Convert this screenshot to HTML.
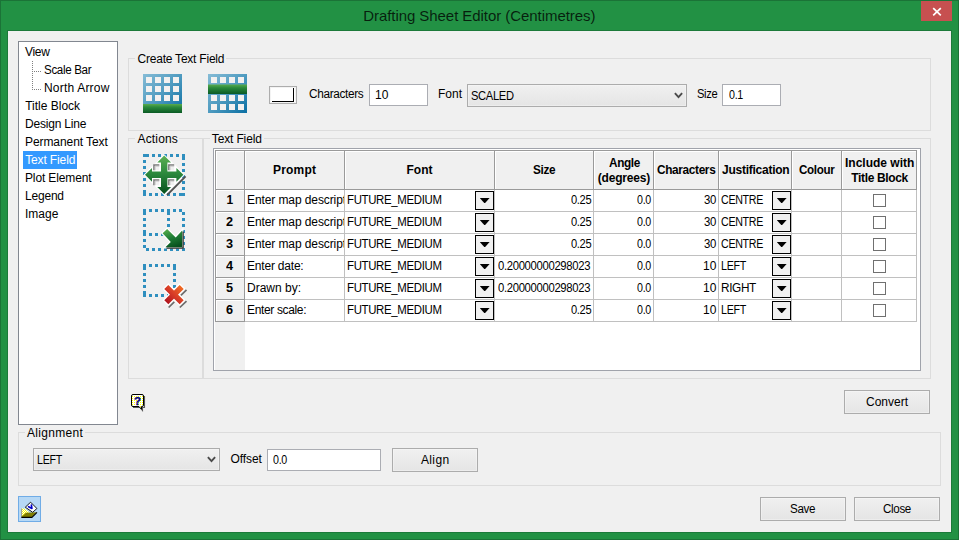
<!DOCTYPE html>
<html lang="en"><head><meta charset="utf-8"><title>Drafting Sheet Editor (Centimetres)</title>
<style>
html,body{margin:0;padding:0}
body{width:959px;height:540px;position:relative;overflow:hidden;background:#229144;font-family:"Liberation Sans",sans-serif;font-size:12px}
.a{position:absolute;box-sizing:border-box}
.t{position:absolute;white-space:nowrap;transform-origin:0 0}
.gb{position:absolute;box-sizing:border-box;border:1px solid #dcdcdc}
.gap{position:absolute;background:#f0f0f0;height:1px}
.inp{position:absolute;box-sizing:border-box;border:1px solid #abadb3;background:#fff}
.btn{position:absolute;box-sizing:border-box;border:1px solid #acacac;background:linear-gradient(#f0f0f0,#e5e5e5);box-shadow:inset 0 0 0 1px rgba(255,255,255,.3)}
.hc{position:absolute;box-sizing:border-box;top:150px;height:39px;background:#f0f0f0;border-left:1px solid #9a9a9a;border-top:1px solid #9a9a9a;box-shadow:inset 1px 1px 0 #fff}
.rh{position:absolute;box-sizing:border-box;left:215px;width:29px;height:22px;background:#f0f0f0;border-left:1px solid #9a9a9a;border-top:1px solid #9a9a9a;box-shadow:inset 1px 1px 0 #fff}
.gl{position:absolute;background:#9a9a9a}
.vl{position:absolute;width:1px;top:190px;height:132px;background:#c0c0c0}
.hl{position:absolute;height:1px;left:245px;width:672px;background:#c0c0c0}
.dd{position:absolute;box-sizing:border-box;width:19px;height:19px;border:1px solid #000;background:#f0f0f0}
.dd:after{content:"";position:absolute;left:3.8px;top:5.9px;width:9.8px;height:5.6px;background:#000;clip-path:polygon(0 0,100% 0,50% 100%)}
.cb{position:absolute;box-sizing:border-box;left:873px;width:13px;height:13px;border:1px solid #707070;background:#fff}
</style></head><body>
<!-- window frame -->
<div class="a" style="left:0;top:0;width:959px;height:540px;border:1px solid #1b7337"></div>
<div class="a" style="left:7px;top:30px;width:945px;height:503px;background:#1c7a3a"></div>
<div class="a" style="left:8px;top:31px;width:943px;height:501px;background:#f0f0f0"></div>
<!-- close button -->
<div class="a" style="left:921px;top:1px;width:31px;height:20px;background:#c75050"></div>
<svg class="a" style="left:921px;top:1px" width="31" height="20"><path d="M12.2 7.2 L19.8 14.4 M19.8 7.2 L12.2 14.4" stroke="#fff" stroke-width="1.7" fill="none"/></svg>

<!-- tree -->
<div class="a" style="left:18px;top:41px;width:100px;height:384px;border:1px solid #828790;background:#fff"></div>
<div class="a" style="left:23px;top:151px;width:54px;height:18px;background:#3399ff"></div>
<svg class="a" style="left:30px;top:58px" width="14" height="34"><path d="M2.5 3 V32 M2 13.5 H11 M2 31.5 H11" stroke="#808080" stroke-width="1" stroke-dasharray="1 1" fill="none"/></svg>

<!-- group boxes -->
<div class="gb" style="left:128px;top:58px;width:803px;height:73px"></div>
<div class="gap" style="left:135px;top:58px;width:91px"></div>
<div class="gb" style="left:128px;top:138px;width:75px;height:241px"></div>
<div class="gap" style="left:135px;top:138px;width:44px"></div>
<div class="gb" style="left:203px;top:138px;width:728px;height:241px"></div>
<div class="gap" style="left:210px;top:138px;width:54px"></div>
<div class="gb" style="left:18px;top:432px;width:923px;height:54px"></div>
<div class="gap" style="left:25px;top:432px;width:60px"></div>

<!-- create text field icons -->
<svg class="a" style="left:143px;top:74px" width="39" height="39">
<defs>
<linearGradient id="bl" x1="0" y1="0" x2="1" y2="1"><stop offset="0" stop-color="#86bcd6"/><stop offset="0.5" stop-color="#4f9bc0"/><stop offset="1" stop-color="#0a6fa3"/></linearGradient>
<linearGradient id="gr" x1="0" y1="0" x2="0" y2="1"><stop offset="0" stop-color="#5aab4c"/><stop offset="0.35" stop-color="#2b8a3c"/><stop offset="1" stop-color="#0a5a25"/></linearGradient>
<g id="cells4"><rect x="3" width="6" height="6"/><rect x="12" width="6" height="6"/><rect x="21" width="6" height="6"/><rect x="30" width="6" height="6"/></g>
</defs>
<rect width="39" height="39" fill="url(#bl)"/>
<g fill="#f3f1f0"><use href="#cells4" y="3"/><use href="#cells4" y="12"/><use href="#cells4" y="21"/></g>
<rect y="30" width="39" height="9" fill="url(#gr)"/>
</svg>
<svg class="a" style="left:208px;top:74px" width="39" height="39">
<rect width="39" height="39" fill="url(#bl)"/>
<g fill="#f3f1f0"><use href="#cells4" y="3"/><use href="#cells4" y="21"/><use href="#cells4" y="30"/></g>
<rect y="10.5" width="39" height="9.5" fill="url(#gr)"/>
</svg>
<!-- colour swatch -->
<div class="a" style="left:269px;top:86px;width:28px;height:18px;border:1px solid #adadad;background:#fff;box-shadow:inset 0 0 0 1px #f3f3f3"></div>
<div class="a" style="left:272px;top:88px;width:22px;height:14px;border-right:1px solid #000;border-bottom:1px solid #000"></div>

<!-- top row inputs -->
<div class="inp" style="left:369px;top:84px;width:59px;height:22px"></div>
<div class="btn" style="left:467px;top:84px;width:220px;height:23px"></div>
<svg class="a" style="left:674px;top:92px" width="10" height="8"><path d="M0.9 1.2 L4.5 5.1 L8.1 1.2" stroke="#4a4a4a" stroke-width="1.9" fill="none"/></svg>
<div class="inp" style="left:722px;top:84px;width:59px;height:22px"></div>

<!-- action icons -->
<svg class="a" style="left:140px;top:150px" width="50" height="50"><defs><linearGradient id="g2" x1="0" y1="0" x2="0" y2="1"><stop offset="0" stop-color="#5db052"/><stop offset="0.45" stop-color="#2d8a3e"/><stop offset="1" stop-color="#06501e"/></linearGradient></defs><g fill="#2f8fbf"><rect x="3" y="4" width="6" height="3"/><rect x="12" y="4" width="3" height="3"/><rect x="18" y="4" width="3" height="3"/><rect x="24" y="4" width="3" height="3"/><rect x="30" y="4" width="3" height="3"/><rect x="36" y="4" width="3" height="3"/><rect x="42" y="4" width="3" height="6"/><rect x="42" y="13" width="3" height="3"/><rect x="42" y="19" width="3" height="3"/><rect x="42" y="25" width="3" height="3"/><rect x="42" y="31" width="3" height="3"/><rect x="42" y="37" width="3" height="3"/><rect x="39" y="43" width="6" height="3"/><rect x="33" y="43" width="3" height="3"/><rect x="27" y="43" width="3" height="3"/><rect x="21" y="43" width="3" height="3"/><rect x="15" y="43" width="3" height="3"/><rect x="9" y="43" width="3" height="3"/><rect x="3" y="40" width="3" height="6"/><rect x="3" y="34" width="3" height="3"/><rect x="3" y="28" width="3" height="3"/><rect x="3" y="22" width="3" height="3"/><rect x="3" y="16" width="3" height="3"/><rect x="3" y="10" width="3" height="3"/></g><path d="M27 45.2 L45.6 26.4" stroke="#505050" stroke-width="1.9"/><path d="M24.2 4.2 L44.8 24.8 L24.2 45.4 L3.6 24.8 Z" fill="#fff"/><polygon points="24.2,5.6 31.1,12.6 27.4,12.6 27.4,21.6 36.4,21.6 36.4,17.9 43.4,24.8 36.4,31.7 36.4,28 27.4,28 27.4,37 31.1,37 24.2,44 17.3,37 21,37 21,28 12,28 12,31.7 5,24.8 12,17.9 12,21.6 21,21.6 21,12.6 17.3,12.6" fill="url(#g2)"/><rect x="13.2" y="14.3" width="6.1" height="6" fill="#f1f1f1"/><path d="M13.95 20.3 V15.05 H19.3" stroke="#7c7c7c" stroke-width="1.5" fill="none"/><path d="M15.1 20.3 V16.2 H19.3" stroke="#c4c4c4" stroke-width="0.9" fill="none"/><rect x="13.2" y="29.2" width="6.1" height="6" fill="#f1f1f1"/><path d="M13.95 35.2 V29.95 H19.3" stroke="#7c7c7c" stroke-width="1.5" fill="none"/><path d="M15.1 35.2 V31.1 H19.3" stroke="#c4c4c4" stroke-width="0.9" fill="none"/><rect x="28.1" y="14.3" width="6.1" height="6" fill="#f1f1f1"/><path d="M28.85 20.3 V15.05 H34.2" stroke="#7c7c7c" stroke-width="1.5" fill="none"/><path d="M30 20.3 V16.2 H34.2" stroke="#c4c4c4" stroke-width="0.9" fill="none"/><rect x="28.1" y="29.2" width="6.1" height="6" fill="#f1f1f1"/><path d="M28.85 35.2 V29.95 H34.2" stroke="#7c7c7c" stroke-width="1.5" fill="none"/><path d="M30 35.2 V31.1 H34.2" stroke="#c4c4c4" stroke-width="0.9" fill="none"/></svg>
<svg class="a" style="left:140px;top:205px" width="50" height="50"><defs><linearGradient id="g3" x1="0.2" y1="0" x2="0.6" y2="1"><stop offset="0" stop-color="#57ad4c"/><stop offset="0.5" stop-color="#1f7d36"/><stop offset="1" stop-color="#06501e"/></linearGradient></defs><g fill="#2f8fbf"><rect x="3" y="4" width="3" height="6"/><rect x="9" y="4" width="3" height="3"/><rect x="15" y="4" width="3" height="3"/><rect x="21" y="4" width="3" height="3"/><rect x="27" y="4" width="3" height="6"/><rect x="33" y="4" width="3" height="3"/><rect x="39" y="4" width="3" height="3"/><rect x="42" y="7" width="3" height="3"/><rect x="42" y="13" width="3" height="3"/><rect x="42" y="19" width="3" height="3"/><rect x="42" y="25" width="3" height="3"/><rect x="42" y="31" width="3" height="3"/><rect x="42" y="37" width="3" height="3"/><rect x="42" y="43" width="3" height="3"/><rect x="6" y="43" width="3" height="3"/><rect x="12" y="43" width="3" height="3"/><rect x="18" y="43" width="3" height="3"/><rect x="24" y="43" width="3" height="3"/><rect x="30" y="43" width="3" height="3"/><rect x="36" y="43" width="3" height="3"/><rect x="3" y="40" width="3" height="3"/><rect x="3" y="34" width="3" height="3"/><rect x="3" y="25" width="3" height="6"/><rect x="3" y="19" width="3" height="3"/><rect x="3" y="13" width="3" height="3"/><rect x="27" y="13" width="3" height="3"/><rect x="27" y="19" width="3" height="3"/><rect x="27" y="25" width="3" height="3"/><rect x="9" y="28" width="3" height="3"/><rect x="15" y="28" width="3" height="3"/><rect x="21" y="28" width="3" height="3"/></g><polygon points="27.1,24 35.7,32.4 42.2,25.6 42.2,42.2 25.4,42.2 30.8,36.9 22.6,28.3" fill="#fff" stroke="#fff" stroke-width="2.4" stroke-linejoin="miter"/><path d="M43.1 26.5 V43.1 H26.5" stroke="#2a2a2a" stroke-width="1.3" fill="none"/><polygon points="27.1,24 35.7,32.4 42.2,25.6 42.2,42.2 25.4,42.2 30.8,36.9 22.6,28.3" fill="url(#g3)"/></svg>
<svg class="a" style="left:140px;top:260px" width="50" height="50"><defs><linearGradient id="g4" x1="1" y1="0" x2="0" y2="1"><stop offset="0" stop-color="#f06c22"/><stop offset="0.5" stop-color="#d83c27"/><stop offset="1" stop-color="#b0141e"/></linearGradient></defs><g fill="#2f8fbf"><rect x="3" y="4" width="3" height="6"/><rect x="9" y="4" width="3" height="3"/><rect x="15" y="4" width="3" height="3"/><rect x="21" y="4" width="3" height="3"/><rect x="27" y="4" width="3" height="3"/><rect x="33" y="4" width="3" height="6"/><rect x="33" y="13" width="3" height="3"/><rect x="33" y="19" width="3" height="3"/><rect x="33" y="25" width="3" height="3"/><rect x="3" y="13" width="3" height="3"/><rect x="3" y="19" width="3" height="3"/><rect x="3" y="25" width="3" height="3"/><rect x="3" y="31" width="3" height="6"/><rect x="9" y="34" width="3" height="3"/><rect x="15" y="34" width="3" height="3"/><rect x="21" y="34" width="3" height="3"/><rect x="27" y="34" width="3" height="3"/></g><path d="M25.4 26 L42.6 43.2 M42.6 26 L25.4 43.2" stroke="#fff" stroke-width="8.2" fill="none"/><path d="M40.9 35.4 L46.5 29.8M28.6 47.5 L34.3 41.9M39.8 47.5 L46.5 41.2" stroke="#6c6c6c" stroke-width="1.7" fill="none"/><path d="M26.3 26.9 L41.7 42.3 M41.7 26.9 L26.3 42.3" stroke="url(#g4)" stroke-width="5.7" fill="none" /></svg>

<!-- table -->
<div class="a" style="left:213px;top:148px;width:708px;height:223px;border:1px solid #a0a3ab;background:#fff"></div>
<div class="a" style="left:215px;top:150px;width:30px;height:220px;background:#f0f0f0"></div>
<div class="hc" style="left:215px;width:29px"></div>
<div class="hc" style="left:244px;width:100px"></div>
<div class="hc" style="left:344px;width:150px"></div>
<div class="hc" style="left:494px;width:99px"></div>
<div class="hc" style="left:593px;width:60px"></div>
<div class="hc" style="left:653px;width:65px"></div>
<div class="hc" style="left:718px;width:73px"></div>
<div class="hc" style="left:791px;width:50px"></div>
<div class="hc" style="left:841px;width:75px"></div>
<div class="gl" style="left:916px;top:150px;width:1px;height:40px"></div>
<div class="rh" style="top:189px"></div><div class="rh" style="top:211px"></div><div class="rh" style="top:233px"></div>
<div class="rh" style="top:255px"></div><div class="rh" style="top:277px"></div><div class="rh" style="top:299px"></div>
<div class="gl" style="left:215px;top:189px;width:702px;height:1px"></div>
<div class="gl" style="left:244px;top:189px;width:1px;height:133px"></div>
<div class="gl" style="left:215px;top:321px;width:30px;height:1px"></div>
<div class="vl" style="left:344px"></div><div class="vl" style="left:494px"></div><div class="vl" style="left:593px"></div>
<div class="vl" style="left:653px"></div><div class="vl" style="left:718px"></div><div class="vl" style="left:791px"></div>
<div class="vl" style="left:841px"></div><div class="vl" style="left:916px"></div>
<div class="hl" style="top:211px"></div><div class="hl" style="top:233px"></div><div class="hl" style="top:255px"></div>
<div class="hl" style="top:277px"></div><div class="hl" style="top:299px"></div><div class="hl" style="top:321px"></div>
<div class="dd" style="left:475px;top:191px"></div><div class="dd" style="left:475px;top:213px"></div><div class="dd" style="left:475px;top:235px"></div>
<div class="dd" style="left:475px;top:257px"></div><div class="dd" style="left:475px;top:279px"></div><div class="dd" style="left:475px;top:301px"></div>
<div class="dd" style="left:772px;top:191px"></div><div class="dd" style="left:772px;top:213px"></div><div class="dd" style="left:772px;top:235px"></div>
<div class="dd" style="left:772px;top:257px"></div><div class="dd" style="left:772px;top:279px"></div><div class="dd" style="left:772px;top:301px"></div>
<div class="cb" style="top:194px"></div><div class="cb" style="top:216px"></div><div class="cb" style="top:238px"></div>
<div class="cb" style="top:260px"></div><div class="cb" style="top:282px"></div><div class="cb" style="top:304px"></div>

<!-- help icon -->
<svg class="a" style="left:130px;top:392px" width="18" height="20"><defs><pattern id="yd" width="2" height="2" patternUnits="userSpaceOnUse"><rect width="2" height="2" fill="#fff"/><rect width="1" height="1" fill="#ffff00"/></pattern></defs><path d="M3 15.5 H10 L12.5 18.5 V15.5 H14.5 V4" stroke="#5a5a5a" stroke-width="1.1" fill="none"/><path d="M3 2.5 H12 Q13.500 2.5 13.5 4 V13 Q13.5 14.5 12 14.5 H11.5 V17.2 L9 14.5 H3 Q1.5 14.5 1.5 13 V4 Q1.5 2.5 3 2.5 Z" fill="url(#yd)" stroke="#000" stroke-width="1"/><text x="7.5" y="13" font-family="Liberation Sans, sans-serif" font-weight="bold" font-size="11.5" text-anchor="middle" fill="#000080" stroke="#000080" stroke-width="0.35">?</text></svg>

<!-- buttons -->
<div class="btn" style="left:844px;top:390px;width:86px;height:24px"></div>
<div class="btn" style="left:760px;top:497px;width:86px;height:24px"></div>
<div class="btn" style="left:854px;top:497px;width:86px;height:24px"></div>

<!-- alignment row -->
<div class="btn" style="left:33px;top:448px;width:187px;height:23px"></div>
<svg class="a" style="left:207px;top:456px" width="10" height="8"><path d="M0.9 1.2 L4.5 5.1 L8.1 1.2" stroke="#4a4a4a" stroke-width="1.9" fill="none"/></svg>
<div class="inp" style="left:267px;top:449px;width:114px;height:22px"></div>
<div class="btn" style="left:392px;top:448px;width:86px;height:24px"></div>

<!-- bottom-left icon button -->
<div class="a" style="left:18px;top:496px;width:23px;height:26px;border:1px solid #70ace6;background:#b6d8f5"></div>
<svg class="a" style="left:18px;top:496px" width="23" height="26"><defs><pattern id="yd2" width="2" height="2" patternUnits="userSpaceOnUse"><rect width="2" height="2" fill="#ffff00"/><rect width="1" height="1" fill="#fff"/><rect x="1" y="1" width="1" height="1" fill="#fff"/></pattern></defs><polygon points="3.3,12.6 6.6,12.6 11.4,16.2 3.4,20.8" fill="url(#yd2)"/><path d="M3.6 12.8 V20.6" stroke="#909090" stroke-width="0.9"/><polygon points="7.9,16.8 18.6,16.2 13.8,21 3.3,21" fill="#807e00"/><path d="M3.3 21.4 H13.9 L19 16.3" stroke="#000" stroke-width="1.1" fill="none"/><polygon points="12.6,6.2 18.9,12.5 14.7,16.3 7.3,11.2" fill="#fff" stroke="#000" stroke-width="0.9"/><path d="M10.6 10.7 L13.9 12.4 L13.4 9.2" stroke="#0000c8" stroke-width="1.7" stroke-linejoin="round" stroke-linecap="round" fill="none"/></svg>

<span class="t" style="top:7px;font-size:15px;line-height:17px;color:rgba(0,0,0,.78);letter-spacing:-0.059px;left:363.20px;">Drafting Sheet Editor (Centimetres)</span>
<span class="t" style="top:45px;font-size:12px;line-height:14px;color:#000;letter-spacing:-0.350px;left:25.10px;">View</span>
<span class="t" style="top:63px;font-size:12px;line-height:14px;color:#000;letter-spacing:-0.350px;transform:scaleX(0.9647);left:43.54px;">Scale Bar</span>
<span class="t" style="top:81px;font-size:12px;line-height:14px;color:#000;letter-spacing:0.200px;left:44.00px;">North Arrow</span>
<span class="t" style="top:99px;font-size:12px;line-height:14px;color:#000;left:25.20px;">Title Block</span>
<span class="t" style="top:117px;font-size:12px;line-height:14px;color:#000;letter-spacing:-0.200px;left:25.00px;">Design Line</span>
<span class="t" style="top:135px;font-size:12px;line-height:14px;color:#000;letter-spacing:-0.077px;left:25.00px;">Permanent Text</span>
<span class="t" style="top:153px;font-size:12px;line-height:14px;color:#fff;letter-spacing:-0.133px;left:25.20px;">Text Field</span>
<span class="t" style="top:171px;font-size:12px;line-height:14px;color:#000;letter-spacing:-0.136px;left:25.00px;">Plot Element</span>
<span class="t" style="top:189px;font-size:12px;line-height:14px;color:#000;letter-spacing:-0.200px;left:25.00px;">Legend</span>
<span class="t" style="top:207px;font-size:12px;line-height:14px;color:#000;left:25.00px;">Image</span>
<span class="t" style="top:52px;font-size:12px;line-height:14px;color:#000;letter-spacing:-0.219px;left:137.50px;">Create Text Field</span>
<span class="t" style="top:132px;font-size:12px;line-height:14px;color:#000;letter-spacing:0.167px;left:137.50px;">Actions</span>
<span class="t" style="top:132px;font-size:12px;line-height:14px;color:#000;letter-spacing:-0.144px;left:211.80px;">Text Field</span>
<span class="t" style="top:426px;font-size:12px;line-height:14px;color:#000;letter-spacing:0.312px;left:27.00px;">Alignment</span>
<span class="t" style="top:87px;font-size:12px;line-height:14px;color:#000;letter-spacing:-0.350px;transform:scaleX(0.9848);left:308.50px;">Characters</span>
<span class="t" style="top:88px;font-size:12px;line-height:14px;color:#000;left:375.00px;">10</span>
<span class="t" style="top:87px;font-size:12px;line-height:14px;color:#000;left:438.00px;">Font</span>
<span class="t" style="top:89px;font-size:12px;line-height:14px;color:#000;letter-spacing:-0.350px;transform:scaleX(0.9282);left:470.57px;">SCALED</span>
<span class="t" style="top:87px;font-size:12px;line-height:14px;color:#000;letter-spacing:-0.350px;transform:scaleX(0.9308);left:696.57px;">Size</span>
<span class="t" style="top:88px;font-size:12px;line-height:14px;color:#000;letter-spacing:-0.350px;transform:scaleX(0.8896);left:728.50px;">0.1</span>
<span class="t" style="top:453px;font-size:12px;line-height:14px;color:#000;letter-spacing:-0.350px;transform:scaleX(0.8905);left:36.61px;">LEFT</span>
<span class="t" style="top:452px;font-size:12px;line-height:14px;color:#000;letter-spacing:-0.100px;left:230.50px;">Offset</span>
<span class="t" style="top:453px;font-size:12px;line-height:14px;color:#000;letter-spacing:-0.350px;transform:scaleX(0.8896);left:273.00px;">0.0</span>
<span class="t" style="top:453px;font-size:12px;line-height:14px;color:#000;letter-spacing:0.350px;left:421.00px;">Align</span>
<span class="t" style="top:395px;font-size:12px;line-height:14px;color:#000;left:866.00px;">Convert</span>
<span class="t" style="top:502px;font-size:12px;line-height:14px;color:#000;letter-spacing:-0.350px;transform:scaleX(0.9699);left:790.13px;">Save</span>
<span class="t" style="top:502px;font-size:12px;line-height:14px;color:#000;letter-spacing:-0.350px;transform:scaleX(0.9662);left:882.50px;">Close</span>
<span class="t" style="top:163px;font-size:12px;line-height:14px;color:#000;font-weight:bold;letter-spacing:0.200px;left:273.00px;">Prompt</span>
<span class="t" style="top:163px;font-size:12px;line-height:14px;color:#000;font-weight:bold;left:406.50px;">Font</span>
<span class="t" style="top:163px;font-size:12px;line-height:14px;color:#000;font-weight:bold;letter-spacing:-0.350px;transform:scaleX(0.9804);left:533.25px;">Size</span>
<span class="t" style="top:156px;font-size:12px;line-height:14px;color:#000;font-weight:bold;letter-spacing:-0.350px;transform:scaleX(0.9810);left:609.00px;">Angle</span>
<span class="t" style="top:171px;font-size:12px;line-height:14px;color:#000;font-weight:bold;letter-spacing:-0.188px;left:597.75px;">(degrees)</span>
<span class="t" style="top:163px;font-size:12px;line-height:14px;color:#000;font-weight:bold;letter-spacing:-0.350px;transform:scaleX(0.9858);left:657.00px;">Characters</span>
<span class="t" style="top:163px;font-size:12px;line-height:14px;color:#000;font-weight:bold;letter-spacing:-0.250px;left:722.00px;">Justification</span>
<span class="t" style="top:163px;font-size:12px;line-height:14px;color:#000;font-weight:bold;letter-spacing:-0.350px;transform:scaleX(0.9664);left:798.80px;">Colour</span>
<span class="t" style="top:156px;font-size:12px;line-height:14px;color:#000;font-weight:bold;left:845.00px;">Include with</span>
<span class="t" style="top:171px;font-size:12px;line-height:14px;color:#000;font-weight:bold;letter-spacing:-0.350px;left:851.25px;">Title Block</span>
<span class="t" style="top:193px;font-size:12px;line-height:14px;color:#000;font-weight:bold;left:226.50px;">1</span>
<span class="t" style="top:193px;font-size:12px;line-height:14px;color:#000;letter-spacing:-0.095px;left:247.00px;width:97.00px;overflow:hidden;">Enter map description:</span>
<span class="t" style="top:193px;font-size:12px;line-height:14px;color:#000;letter-spacing:-0.350px;transform:scaleX(0.9509);left:346.55px;">FUTURE_MEDIUM</span>
<span class="t" style="top:193px;font-size:12px;line-height:14px;color:#000;letter-spacing:-0.350px;transform:scaleX(0.9248);left:570.50px;">0.25</span>
<span class="t" style="top:193px;font-size:12px;line-height:14px;color:#000;letter-spacing:-0.350px;transform:scaleX(0.8896);left:637.00px;">0.0</span>
<span class="t" style="top:193px;font-size:12px;line-height:14px;color:#000;letter-spacing:-0.350px;transform:scaleX(0.9486);left:704.00px;">30</span>
<span class="t" style="top:193px;font-size:12px;line-height:14px;color:#000;letter-spacing:-0.350px;transform:scaleX(0.8889);left:721.10px;">CENTRE</span>
<span class="t" style="top:215px;font-size:12px;line-height:14px;color:#000;font-weight:bold;transform:scaleX(1.0571);left:226.30px;">2</span>
<span class="t" style="top:215px;font-size:12px;line-height:14px;color:#000;letter-spacing:-0.095px;left:247.00px;width:97.00px;overflow:hidden;">Enter map description:</span>
<span class="t" style="top:215px;font-size:12px;line-height:14px;color:#000;letter-spacing:-0.350px;transform:scaleX(0.9509);left:346.55px;">FUTURE_MEDIUM</span>
<span class="t" style="top:215px;font-size:12px;line-height:14px;color:#000;letter-spacing:-0.350px;transform:scaleX(0.9248);left:570.50px;">0.25</span>
<span class="t" style="top:215px;font-size:12px;line-height:14px;color:#000;letter-spacing:-0.350px;transform:scaleX(0.8896);left:637.00px;">0.0</span>
<span class="t" style="top:215px;font-size:12px;line-height:14px;color:#000;letter-spacing:-0.350px;transform:scaleX(0.9486);left:704.00px;">30</span>
<span class="t" style="top:215px;font-size:12px;line-height:14px;color:#000;letter-spacing:-0.350px;transform:scaleX(0.8889);left:721.10px;">CENTRE</span>
<span class="t" style="top:237px;font-size:12px;line-height:14px;color:#000;font-weight:bold;transform:scaleX(1.0571);left:226.30px;">3</span>
<span class="t" style="top:237px;font-size:12px;line-height:14px;color:#000;letter-spacing:-0.095px;left:247.00px;width:97.00px;overflow:hidden;">Enter map description:</span>
<span class="t" style="top:237px;font-size:12px;line-height:14px;color:#000;letter-spacing:-0.350px;transform:scaleX(0.9509);left:346.55px;">FUTURE_MEDIUM</span>
<span class="t" style="top:237px;font-size:12px;line-height:14px;color:#000;letter-spacing:-0.350px;transform:scaleX(0.9248);left:570.50px;">0.25</span>
<span class="t" style="top:237px;font-size:12px;line-height:14px;color:#000;letter-spacing:-0.350px;transform:scaleX(0.8896);left:637.00px;">0.0</span>
<span class="t" style="top:237px;font-size:12px;line-height:14px;color:#000;letter-spacing:-0.350px;transform:scaleX(0.9486);left:704.00px;">30</span>
<span class="t" style="top:237px;font-size:12px;line-height:14px;color:#000;letter-spacing:-0.350px;transform:scaleX(0.8889);left:721.10px;">CENTRE</span>
<span class="t" style="top:259px;font-size:12px;line-height:14px;color:#000;font-weight:bold;transform:scaleX(1.0571);left:226.30px;">4</span>
<span class="t" style="top:259px;font-size:12px;line-height:14px;color:#000;letter-spacing:-0.200px;left:247.00px;width:97.00px;overflow:hidden;">Enter date:</span>
<span class="t" style="top:259px;font-size:12px;line-height:14px;color:#000;letter-spacing:-0.350px;transform:scaleX(0.9509);left:346.55px;">FUTURE_MEDIUM</span>
<span class="t" style="top:259px;font-size:12px;line-height:14px;color:#000;letter-spacing:-0.350px;transform:scaleX(0.9412);left:498.30px;">0.20000000298023</span>
<span class="t" style="top:259px;font-size:12px;line-height:14px;color:#000;letter-spacing:-0.350px;transform:scaleX(0.8896);left:637.00px;">0.0</span>
<span class="t" style="top:259px;font-size:12px;line-height:14px;color:#000;left:703.00px;">10</span>
<span class="t" style="top:259px;font-size:12px;line-height:14px;color:#000;letter-spacing:-0.350px;transform:scaleX(0.8905);left:720.91px;">LEFT</span>
<span class="t" style="top:281px;font-size:12px;line-height:14px;color:#000;font-weight:bold;transform:scaleX(1.0571);left:226.30px;">5</span>
<span class="t" style="top:281px;font-size:12px;line-height:14px;color:#000;left:247.00px;width:97.00px;overflow:hidden;">Drawn by:</span>
<span class="t" style="top:281px;font-size:12px;line-height:14px;color:#000;letter-spacing:-0.350px;transform:scaleX(0.9509);left:346.55px;">FUTURE_MEDIUM</span>
<span class="t" style="top:281px;font-size:12px;line-height:14px;color:#000;letter-spacing:-0.350px;transform:scaleX(0.9412);left:498.30px;">0.20000000298023</span>
<span class="t" style="top:281px;font-size:12px;line-height:14px;color:#000;letter-spacing:-0.350px;transform:scaleX(0.8896);left:637.00px;">0.0</span>
<span class="t" style="top:281px;font-size:12px;line-height:14px;color:#000;left:703.00px;">10</span>
<span class="t" style="top:281px;font-size:12px;line-height:14px;color:#000;letter-spacing:-0.350px;transform:scaleX(0.9827);left:720.82px;">RIGHT</span>
<span class="t" style="top:303px;font-size:12px;line-height:14px;color:#000;font-weight:bold;transform:scaleX(1.0571);left:226.30px;">6</span>
<span class="t" style="top:303px;font-size:12px;line-height:14px;color:#000;letter-spacing:-0.350px;left:247.00px;width:97.00px;overflow:hidden;">Enter scale:</span>
<span class="t" style="top:303px;font-size:12px;line-height:14px;color:#000;letter-spacing:-0.350px;transform:scaleX(0.9509);left:346.55px;">FUTURE_MEDIUM</span>
<span class="t" style="top:303px;font-size:12px;line-height:14px;color:#000;letter-spacing:-0.350px;transform:scaleX(0.9248);left:570.50px;">0.25</span>
<span class="t" style="top:303px;font-size:12px;line-height:14px;color:#000;letter-spacing:-0.350px;transform:scaleX(0.8896);left:637.00px;">0.0</span>
<span class="t" style="top:303px;font-size:12px;line-height:14px;color:#000;left:703.00px;">10</span>
<span class="t" style="top:303px;font-size:12px;line-height:14px;color:#000;letter-spacing:-0.350px;transform:scaleX(0.8905);left:720.91px;">LEFT</span>
</body></html>
